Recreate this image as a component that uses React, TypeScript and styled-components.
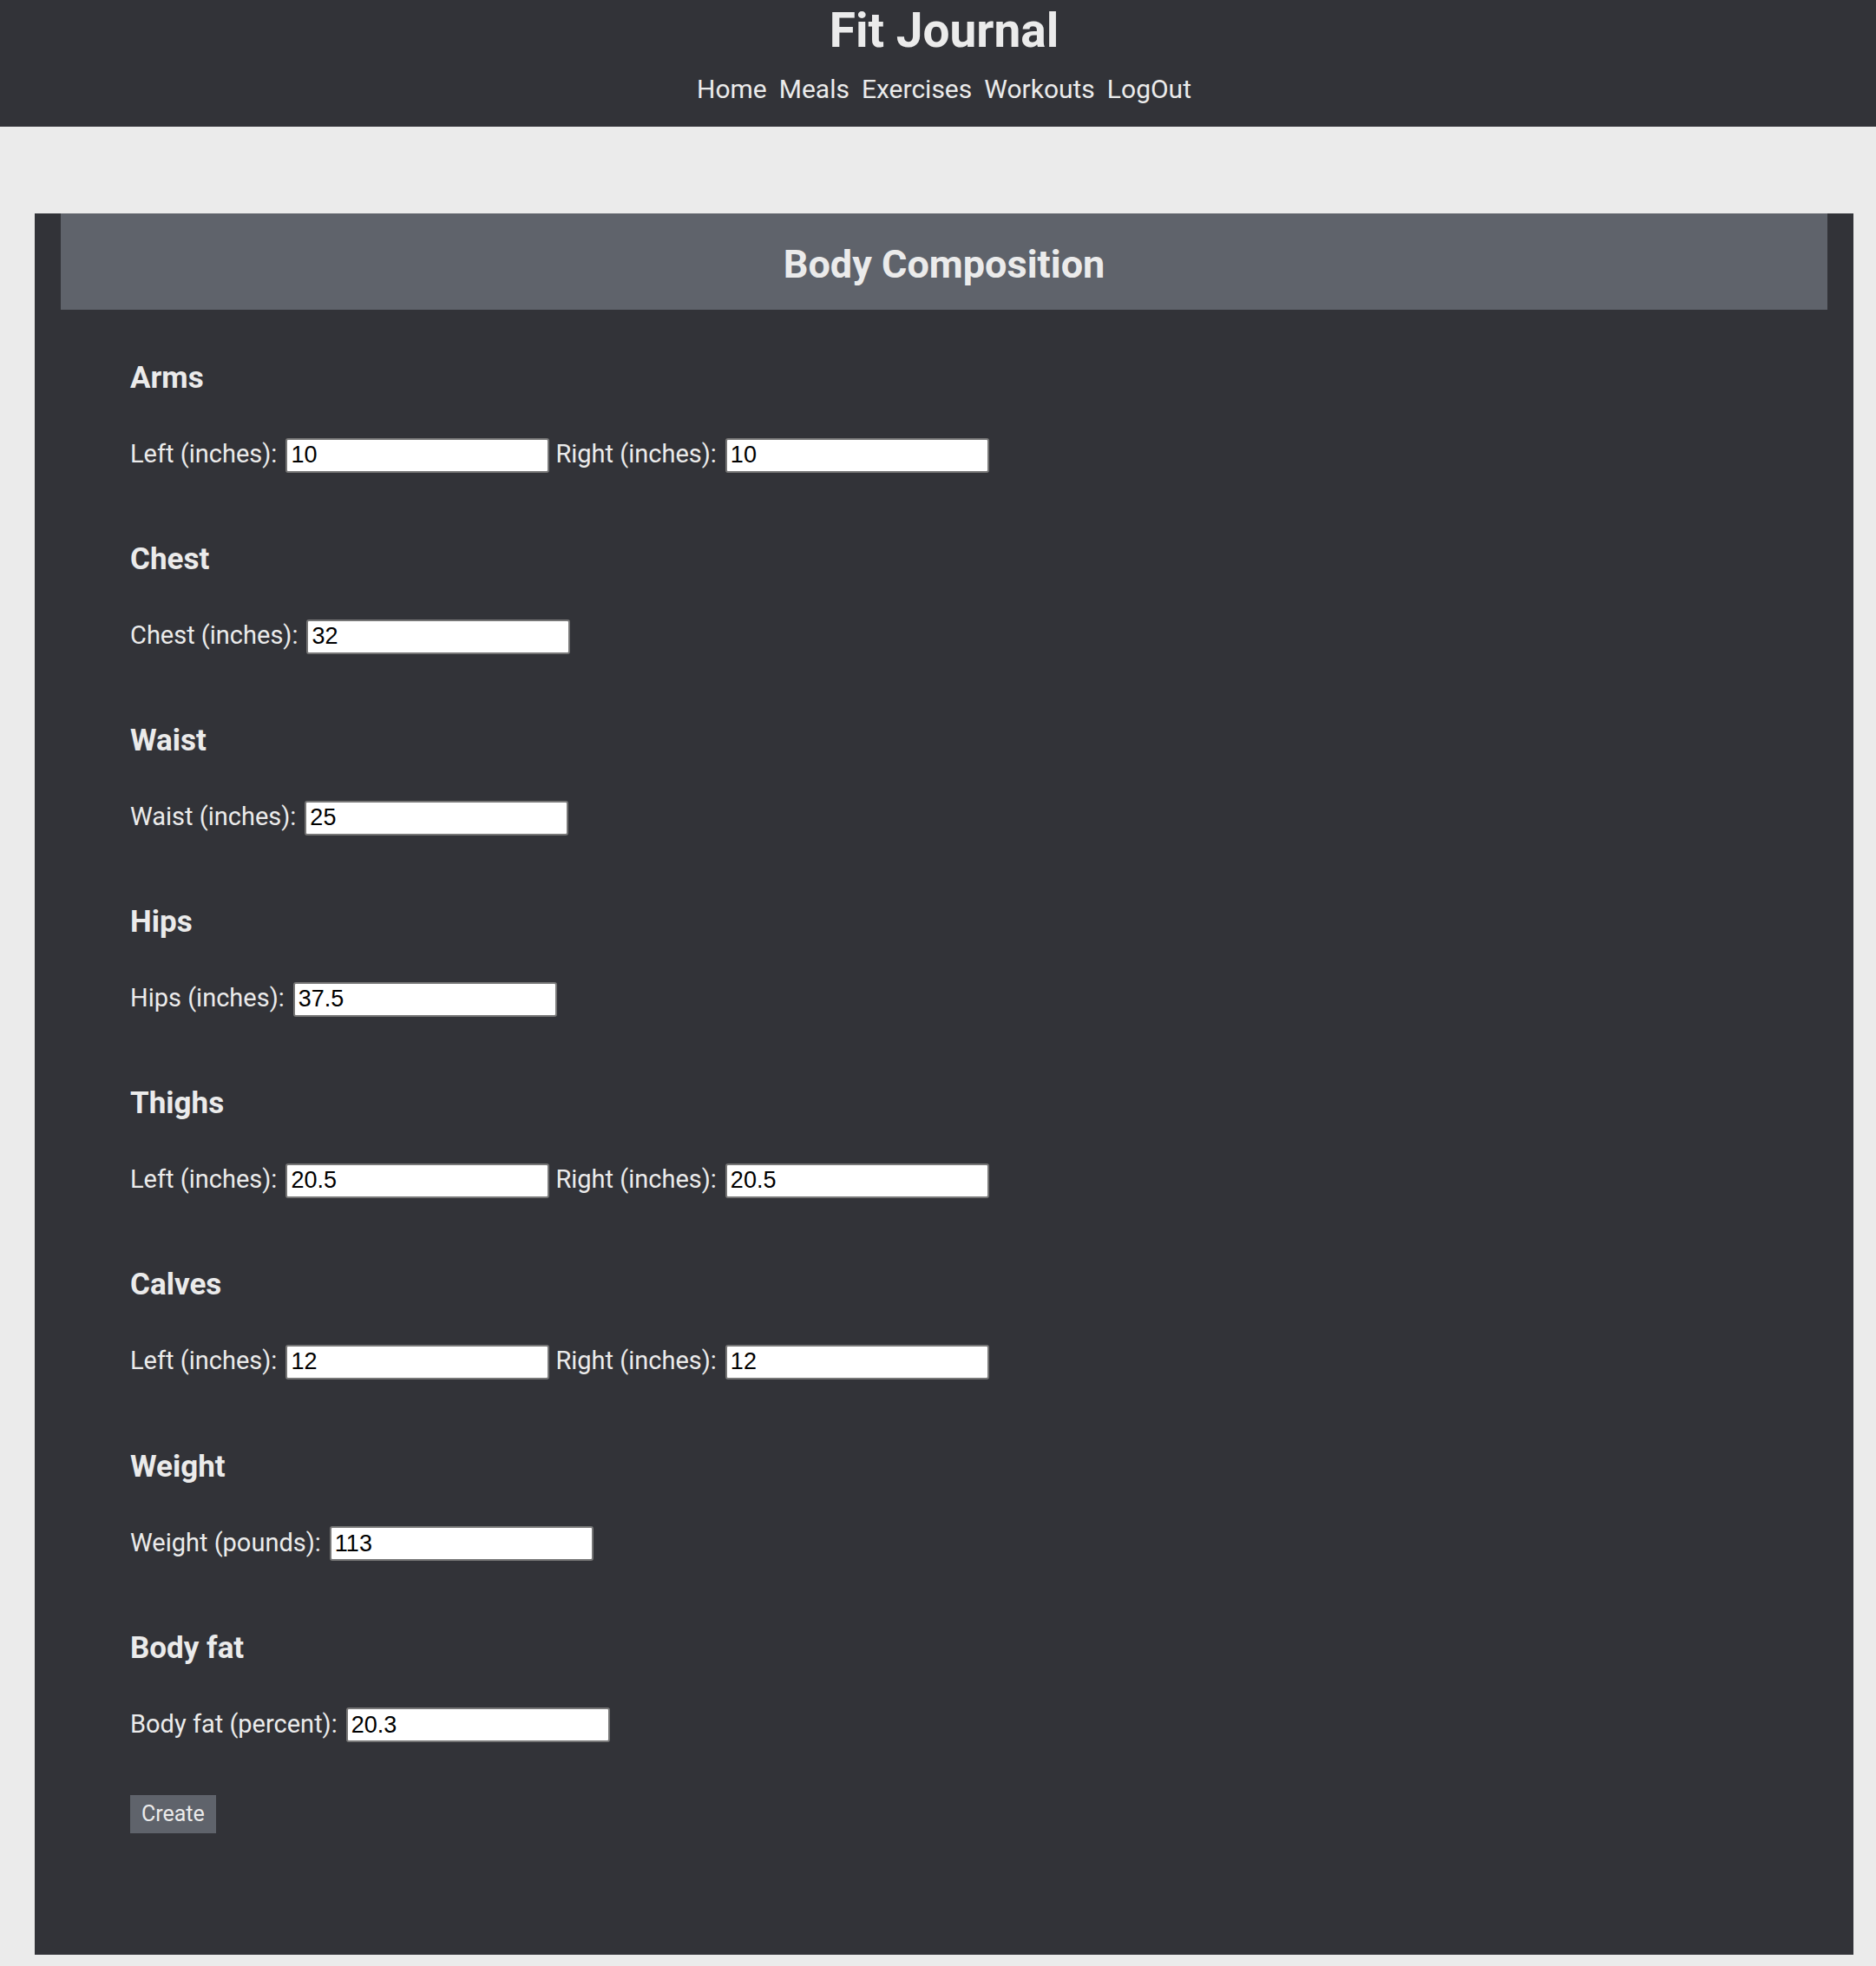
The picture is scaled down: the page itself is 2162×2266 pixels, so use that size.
import React from "react";
import styled, { createGlobalStyle } from "styled-components";

const GlobalStyle = createGlobalStyle`
  html, body {
    margin: 0;
    padding: 0;
    background: #ebebeb;
  }
  body {
    font-family: Roboto, "Noto Sans", Arial, sans-serif;
    color: #ebebeb;
  }
  * { box-sizing: border-box; }
`;

const Header = styled.header`
  background: #323338;
  padding: 3px 0 23px 14px;
  text-align: center;
`;

const Title = styled.h1`
  margin: 0;
  font-weight: 700;
  font-size: 55px;
  line-height: 64px;
  color: #ebebeb;
`;

const Nav = styled.nav`
  margin-top: 16px;
  display: flex;
  justify-content: center;
  gap: 14px;
`;

const NavLink = styled.a`
  font-size: 30px;
  line-height: 40px;
  color: #ebebeb;
  text-decoration: none;
  cursor: pointer;
`;

const Main = styled.main`
  padding: 100px 26px 12px 40px;
`;

const Card = styled.section`
  background: #323338;
  padding: 0 30px 140px;
`;

const CardHeader = styled.h2`
  margin: 0;
  background: #5f636b;
  height: 111px;
  padding-top: 6px;
  line-height: 105px;
  font-size: 45px;
  font-weight: 700;
  text-align: center;
  color: #ebebeb;
`;

const Form = styled.form`
  padding: 59px 0 0 80px;
`;

const Sections = styled.div`
  display: flex;
  flex-direction: column;
  gap: 80.6px;
`;

const Group = styled.div`
  display: flex;
  flex-direction: column;
  align-items: flex-start;
`;

const GroupTitle = styled.h3`
  margin: 0 0 47px;
  font-size: 35px;
  line-height: 40px;
  font-weight: 700;
  color: #ebebeb;
`;

const Row = styled.div`
  display: flex;
  align-items: baseline;
  gap: 7px;
`;

const Field = styled.label`
  display: inline-flex;
  align-items: baseline;
  gap: 10px;
  font-size: 29px;
  line-height: 40px;
  color: #ebebeb;
`;

const Input = styled.input`
  width: 304px;
  height: 40px;
  border: 2px solid #767676;
  border-radius: 3px;
  padding: 0 4px;
  background: #ffffff;
  color: #000000;
  font-family: "Liberation Sans", Arial, sans-serif;
  font-size: 27px;
  outline: none;
`;

const Button = styled.button`
  margin-top: 61px;
  height: 44px;
  padding: 0 13px;
  border: none;
  background: #5f636b;
  color: #ebebeb;
  font-family: Roboto, "Noto Sans", Arial, sans-serif;
  font-size: 25px;
  line-height: 44px;
  cursor: pointer;
`;

type FieldDef = { label: string; value: string };
type GroupDef = { title: string; fields: FieldDef[] };

const groups: GroupDef[] = [
  { title: "Arms", fields: [{ label: "Left (inches):", value: "10" }, { label: "Right (inches):", value: "10" }] },
  { title: "Chest", fields: [{ label: "Chest (inches):", value: "32" }] },
  { title: "Waist", fields: [{ label: "Waist (inches):", value: "25" }] },
  { title: "Hips", fields: [{ label: "Hips (inches):", value: "37.5" }] },
  { title: "Thighs", fields: [{ label: "Left (inches):", value: "20.5" }, { label: "Right (inches):", value: "20.5" }] },
  { title: "Calves", fields: [{ label: "Left (inches):", value: "12" }, { label: "Right (inches):", value: "12" }] },
  { title: "Weight", fields: [{ label: "Weight (pounds):", value: "113" }] },
  { title: "Body fat", fields: [{ label: "Body fat (percent):", value: "20.3" }] },
];

export default function App() {
  return (
    <>
      <GlobalStyle />
      <Header>
        <Title>Fit Journal</Title>
        <Nav>
          <NavLink>Home</NavLink>
          <NavLink>Meals</NavLink>
          <NavLink>Exercises</NavLink>
          <NavLink>Workouts</NavLink>
          <NavLink>LogOut</NavLink>
        </Nav>
      </Header>
      <Main>
        <Card>
          <CardHeader>Body Composition</CardHeader>
          <Form onSubmit={(e) => e.preventDefault()}>
            <Sections>
              {groups.map((g) => (
                <Group key={g.title}>
                  <GroupTitle>{g.title}</GroupTitle>
                  <Row>
                    {g.fields.map((f, i) => (
                      <Field key={i}>
                        {f.label}
                        <Input type="text" defaultValue={f.value} />
                      </Field>
                    ))}
                  </Row>
                </Group>
              ))}
            </Sections>
            <Button type="submit">Create</Button>
          </Form>
        </Card>
      </Main>
    </>
  );
}
